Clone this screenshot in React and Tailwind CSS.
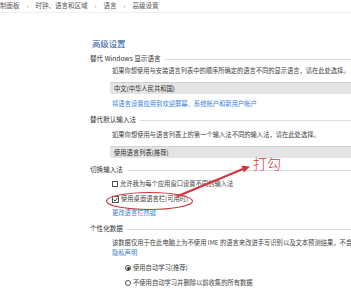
const cjk = { fontFamily: '"Noto Sans CJK SC", "Noto Sans", sans-serif' }

function Section({ title }) {
  return (
    <div className="flex h-[12px] items-center text-[6.6px] text-[#333]">
      <span className="whitespace-nowrap">{title}</span>
      <div className="ml-[4px] h-px flex-1 bg-[#dcdcdc]" />
    </div>
  )
}

function Select({ label }) {
  return (
    <div className="ml-[20px] flex h-[12px] items-center border-t border-[#d0d0d0] bg-[#e4e4e4] pl-[4px] text-[6.3px] text-[#333]">
      {label}
    </div>
  )
}

export default function App() {
  return (
    <div className="relative h-[290px] w-[351px] overflow-hidden bg-white" style={cjk}>
      <div className="flex h-[13px] items-center border-b border-[#f0f0f0] text-[6.5px] text-[#555] whitespace-nowrap">
        <span>制面板</span>
        <span className="mx-[7px] text-[#888]">›</span>
        <span>时钟、语言和区域</span>
        <span className="mx-[7px] text-[#888]">›</span>
        <span>语言</span>
        <span className="mx-[7px] text-[#888]">›</span>
        <span>高级设置</span>
      </div>

      <div className="flex flex-col pl-[90px] whitespace-nowrap">
        <div className="mt-[23px] flex h-[14px] items-center pl-[2px] text-[8.4px] text-[#2a5ba8]">高级设置</div>

        <div className="mt-[3px]"><Section title="替代 Windows 显示语言" /></div>
        <div className="flex h-[12px] items-center pl-[22px] text-[6.25px] text-[#444]">
          如果你想使用与安装语言列表中的顺序所确定的语言不同的显示语言，请在此处选择。
        </div>
        <div className="mt-[5px]"><Select label="中文(中华人民共和国)" /></div>
        <div className="mt-[4px] flex h-[12px] items-center pl-[22px] text-[6.3px] text-[#3b82d6]">
          将语言设置应用到欢迎屏幕、系统帐户和新用户帐户
        </div>

        <div className="mt-[4px]"><Section title="替代默认输入法" /></div>
        <div className="mt-[3px] flex h-[12px] items-center pl-[22px] text-[6.3px] text-[#444]">
          如果你想使用与语言列表上的第一个输入法不同的输入法，请在此处选择。
        </div>
        <div className="mt-[5px]"><Select label="使用语言列表(推荐)" /></div>

        <div className="mt-[6px]"><Section title="切换输入法" /></div>
        <div className="mt-[2px] flex h-[12px] items-center pl-[22px] text-[6.3px] text-[#444]">
          <span className="mr-[2px] h-[6px] w-[6px] border border-[#555] bg-white" />
          允许我为每个应用窗口设置不同的输入法
        </div>
        <div className="mt-[3px] flex h-[12px] items-center pl-[22px] text-[6.3px] text-[#444]">
          <svg viewBox="0 0 7 7" className="mr-[2px] h-[7px] w-[7px]">
            <rect x="0.5" y="0.5" width="6" height="6" fill="#fff" stroke="#555" strokeWidth="1" />
            <path d="M1.6 3.6 L3 5 L5.6 1.9" fill="none" stroke="#222" strokeWidth="0.9" />
          </svg>
          使用桌面语言栏(可用时)
        </div>
        <div className="mt-[2px] flex h-[12px] items-center pl-[22px] text-[6.3px] text-[#3b82d6]">
          更改语言栏热键
        </div>

        <div className="mt-[4px]"><Section title="个性化数据" /></div>
        <div className="mt-[3px] flex h-[10px] items-center pl-[22px] text-[6.3px] text-[#444]">
          该数据仅用于在此电脑上为不使用 IME 的语言来改进手写识别以及文本预测结果，不会
        </div>
        <div className="flex h-[10px] items-center pl-[22px] text-[6.3px] text-[#3b82d6]">隐私声明</div>
        <div className="mt-[4px] flex h-[12px] items-center pl-[35px] text-[6.3px] text-[#444]">
          <span className="mr-[2px] flex h-[6px] w-[6px] items-center justify-center rounded-full border border-[#555]">
            <span className="h-[3px] w-[3px] rounded-full bg-[#333]" />
          </span>
          使用自动学习(推荐)
        </div>
        <div className="mt-[3px] flex h-[12px] items-center pl-[35px] text-[6.3px] text-[#444]">
          <span className="mr-[2px] h-[6px] w-[6px] rounded-full border border-[#555]" />
          不使用自动学习并删除以前收集的所有数据
        </div>
      </div>

      <div className="absolute left-[253px] top-[156px] text-[14px] leading-none font-light text-[#d8353c]">打勾</div>
      <svg className="pointer-events-none absolute left-0 top-0" width="351" height="290">
        <ellipse cx="149.5" cy="201" rx="43" ry="8.5" fill="none" stroke="#c9373d" strokeWidth="1.2" />
        <path d="M178 196 L243 169" stroke="#d8333a" strokeWidth="2" strokeLinecap="round" />
        <path d="M250 166.5 L241.5 165.8 L243.8 172.6 Z" fill="#d8333a" />
      </svg>
    </div>
  )
}
